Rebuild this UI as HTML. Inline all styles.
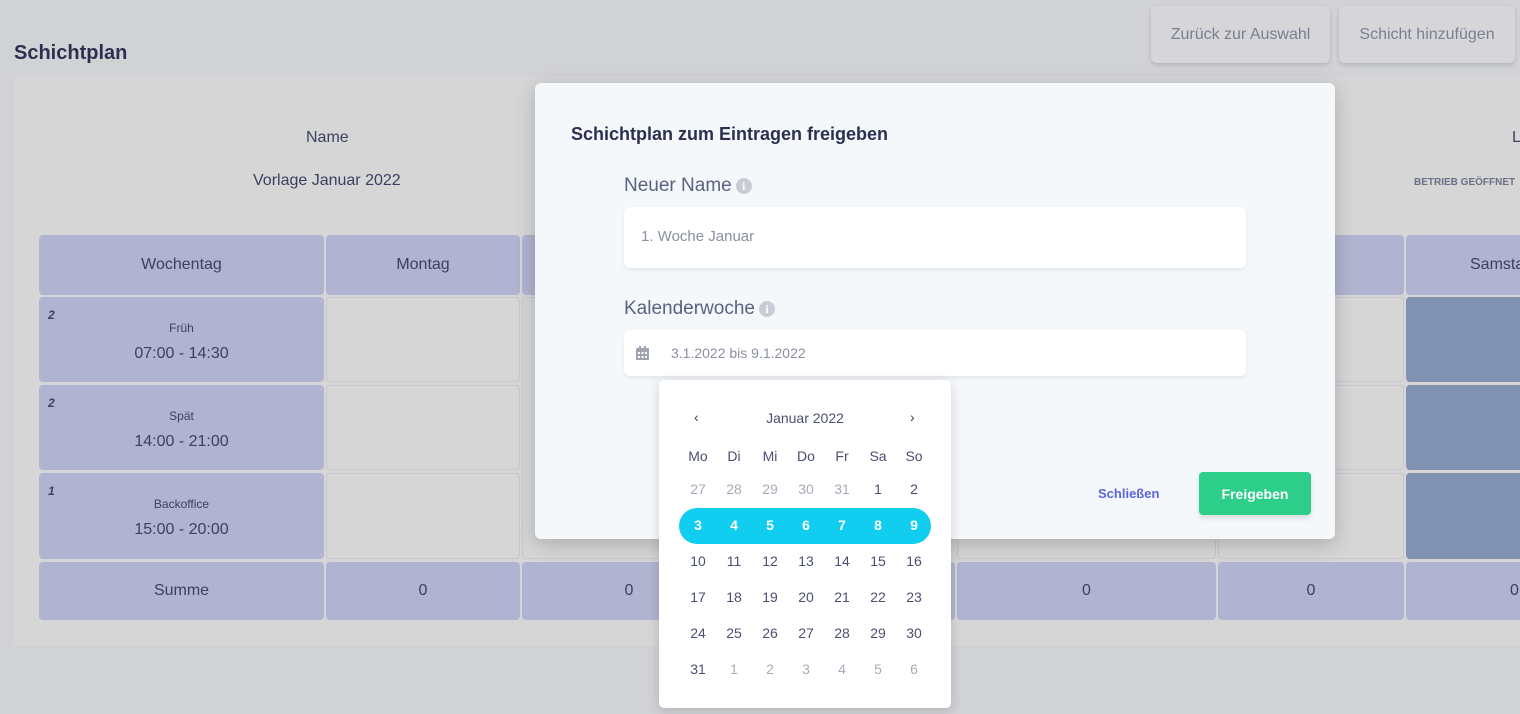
<!DOCTYPE html>
<html><head><meta charset="utf-8"><style>
*{box-sizing:border-box;margin:0;padding:0}
body{width:1520px;height:714px;overflow:hidden;background:#d1d2d6;font-family:"Liberation Sans",sans-serif;color:#3a4060;position:relative}
.abs{position:absolute}
.btn{position:absolute;top:6px;height:57px;background:#d6d6d8;border-radius:6px;box-shadow:0 2px 5px rgba(0,0,0,.15);color:#7a8092;font-size:16px;display:flex;align-items:center;justify-content:center}
.card{position:absolute;left:14px;top:76px;width:1520px;height:570px;background:#d6d6d6;border-radius:4px}
.c{position:absolute;border-radius:4px;display:flex;align-items:center;justify-content:center;font-size:16px;color:#3a4060}
.h{background:#b0b4d0}
.e{background:#d6d6d6;border:1px solid #c8c8cc}
.d{background:#8191b1}
.num{position:absolute;left:9px;top:11px;font-size:12px;font-weight:bold;font-style:italic}
.modal{position:absolute;left:535px;top:83px;width:800px;height:456px;background:#f5f8fb;border-radius:6px;box-shadow:0 5px 20px rgba(0,0,0,.2)}
.inp{position:absolute;background:#fff;border-radius:6px;box-shadow:0 2px 4px rgba(0,0,0,.08)}
.lbl{position:absolute;font-size:19px;color:#5b6280}
.info{display:inline-block;width:16px;height:16px;border-radius:50%;background:#c9ccd4;color:#fff;font-size:12px;font-weight:bold;text-align:center;line-height:16px;vertical-align:1px;margin-left:4px;font-family:"Liberation Serif",serif}
.cal{position:absolute;left:659px;top:380px;width:292px;height:328px;background:#fff;border-radius:5px;box-shadow:0 3px 12px rgba(0,0,0,.15)}
.g{position:absolute;width:36px;text-align:center;font-size:14px;color:#4a5070}
.m{color:#a8acb8}
.w{color:#fff;font-weight:bold}
.sh{flex-direction:column}
.sh .t1{font-size:12px;margin-top:4px}
.sh .t2{margin-top:10px}
</style></head><body>
<div class="abs" style="left:14px;top:42px;font-size:20px;font-weight:bold;color:#2c3050">Schichtplan</div>
<div class="btn" style="left:1151px;width:179px">Zurück zur Auswahl</div>
<div class="btn" style="left:1339px;width:176px">Schicht hinzufügen</div>
<div class="card"></div>
<div class="abs" style="left:306px;top:129px;font-size:16px">Name</div>
<div class="abs" style="left:253px;top:172px;font-size:16px">Vorlage Januar 2022</div>
<div class="abs" style="left:1512px;top:129px;font-size:16px">L</div>
<div class="abs" style="left:1414px;top:177px;font-size:10px;font-weight:bold;color:#6a7086">BETRIEB GEÖFFNET</div>

<div class="c h" style="left:39px;top:235px;width:285px;height:60px">Wochentag</div>
<div class="c h" style="left:326px;top:235px;width:194px;height:60px">Montag</div>
<div class="c h" style="left:522px;top:235px;width:214px;height:60px"></div>
<div class="c h" style="left:1218px;top:235px;width:186px;height:60px"></div>
<div class="c h" style="left:1406px;top:235px;width:130px;height:60px;justify-content:flex-start;padding-left:64px">Samstag</div>

<div class="c h sh" style="left:39px;top:297px;width:285px;height:85px"><span class="num">2</span><span class="t1">Früh</span><span class="t2">07:00 - 14:30</span></div>
<div class="c h sh" style="left:39px;top:385px;width:285px;height:85px"><span class="num">2</span><span class="t1">Spät</span><span class="t2">14:00 - 21:00</span></div>
<div class="c h sh" style="left:39px;top:473px;width:285px;height:86px"><span class="num">1</span><span class="t1">Backoffice</span><span class="t2">15:00 - 20:00</span></div>
<div class="c e" style="left:326px;top:297px;width:194px;height:85px"></div>
<div class="c e" style="left:326px;top:385px;width:194px;height:85px"></div>
<div class="c e" style="left:326px;top:473px;width:194px;height:86px"></div>
<div class="c e" style="left:522px;top:297px;width:214px;height:262px"></div>
<div class="c e" style="left:957px;top:473px;width:259px;height:86px"></div>
<div class="c e" style="left:1218px;top:297px;width:186px;height:85px"></div>
<div class="c e" style="left:1218px;top:385px;width:186px;height:85px"></div>
<div class="c e" style="left:1218px;top:473px;width:186px;height:86px"></div>
<div class="c d" style="left:1406px;top:297px;width:130px;height:85px"></div>
<div class="c d" style="left:1406px;top:385px;width:130px;height:85px"></div>
<div class="c d" style="left:1406px;top:473px;width:130px;height:86px"></div>

<div class="c h" style="left:39px;top:562px;width:285px;height:58px">Summe</div>
<div class="c h" style="left:326px;top:562px;width:194px;height:58px">0</div>
<div class="c h" style="left:522px;top:562px;width:214px;height:58px">0</div>
<div class="c h" style="left:738px;top:562px;width:217px;height:58px"></div>
<div class="c h" style="left:957px;top:562px;width:259px;height:58px">0</div>
<div class="c h" style="left:1218px;top:562px;width:186px;height:58px">0</div>
<div class="c h" style="left:1406px;top:562px;width:130px;height:58px;justify-content:flex-start;padding-left:104px">0</div>

<div class="modal"></div>
<div class="abs" style="left:571px;top:124px;font-size:18px;font-weight:bold;color:#2c3050">Schichtplan zum Eintragen freigeben</div>
<div class="lbl" style="left:624px;top:175px">Neuer Name<span class="info">i</span></div>
<div class="inp" style="left:624px;top:207px;width:622px;height:61px"><span class="abs" style="left:17px;top:21px;font-size:15px;color:#8a90a0">1. Woche Januar</span></div>
<div class="lbl" style="left:624px;top:298px">Kalenderwoche<span class="info">i</span></div>
<div class="inp" style="left:624px;top:330px;width:622px;height:46px">
<svg class="abs" style="left:12px;top:16px" width="13" height="14" viewBox="0 0 13 14"><rect x="0" y="2" width="13" height="12" rx="1" fill="#a0a4b0"/><rect x="3" y="0" width="2" height="4" fill="#a0a4b0"/><rect x="8" y="0" width="2" height="4" fill="#a0a4b0"/><g fill="#fff"><rect x="2" y="6" width="2" height="2"/><rect x="5.5" y="6" width="2" height="2"/><rect x="9" y="6" width="2" height="2"/><rect x="2" y="10" width="2" height="2"/><rect x="5.5" y="10" width="2" height="2"/><rect x="9" y="10" width="2" height="2"/></g></svg>
<span class="abs" style="left:47px;top:15px;font-size:14px;color:#8a90a0">3.1.2022 bis 9.1.2022</span></div>
<div class="abs" style="left:1098px;top:486px;font-size:13px;font-weight:bold;color:#5a64d8">Schließen</div>
<div class="abs" style="left:1199px;top:472px;width:112px;height:43px;background:#2dce89;border-radius:4px;box-shadow:0 3px 6px rgba(0,0,0,.12);color:#fff;font-size:14px;font-weight:bold;display:flex;align-items:center;justify-content:center">Freigeben</div>

<div class="cal">
<div class="abs" style="left:35px;top:29px;font-size:14px">‹</div>
<div class="abs" style="left:0;width:292px;top:30px;text-align:center;font-size:14px;color:#4a5070">Januar 2022</div>
<div class="abs" style="left:251px;top:29px;font-size:14px">›</div>
<div class="abs" style="left:20px;top:128px;width:252px;height:36px;border-radius:18px;background:#11cdef"></div>
</div>
<div id="grid"></div>
<script>
var x0=680,ys=[456,489,525,561,597,633,669],s='';
var rows=[['Mo','Di','Mi','Do','Fr','Sa','So'],['27m','28m','29m','30m','31m','1','2'],['3w','4w','5w','6w','7w','8w','9w'],['10','11','12','13','14','15','16'],['17','18','19','20','21','22','23'],['24','25','26','27','28','29','30'],['31','1m','2m','3m','4m','5m','6m']];
rows.forEach(function(r,i){r.forEach(function(t,j){var c='';if(/[mw]$/.test(t)&&i>0){c=t.slice(-1);t=t.slice(0,-1);}
s+='<div class="g '+c+'" style="left:'+(x0+j*36)+'px;top:'+(ys[i]-8)+'px">'+t+'</div>';});});
document.getElementById('grid').innerHTML=s;
</script>
</body></html>
